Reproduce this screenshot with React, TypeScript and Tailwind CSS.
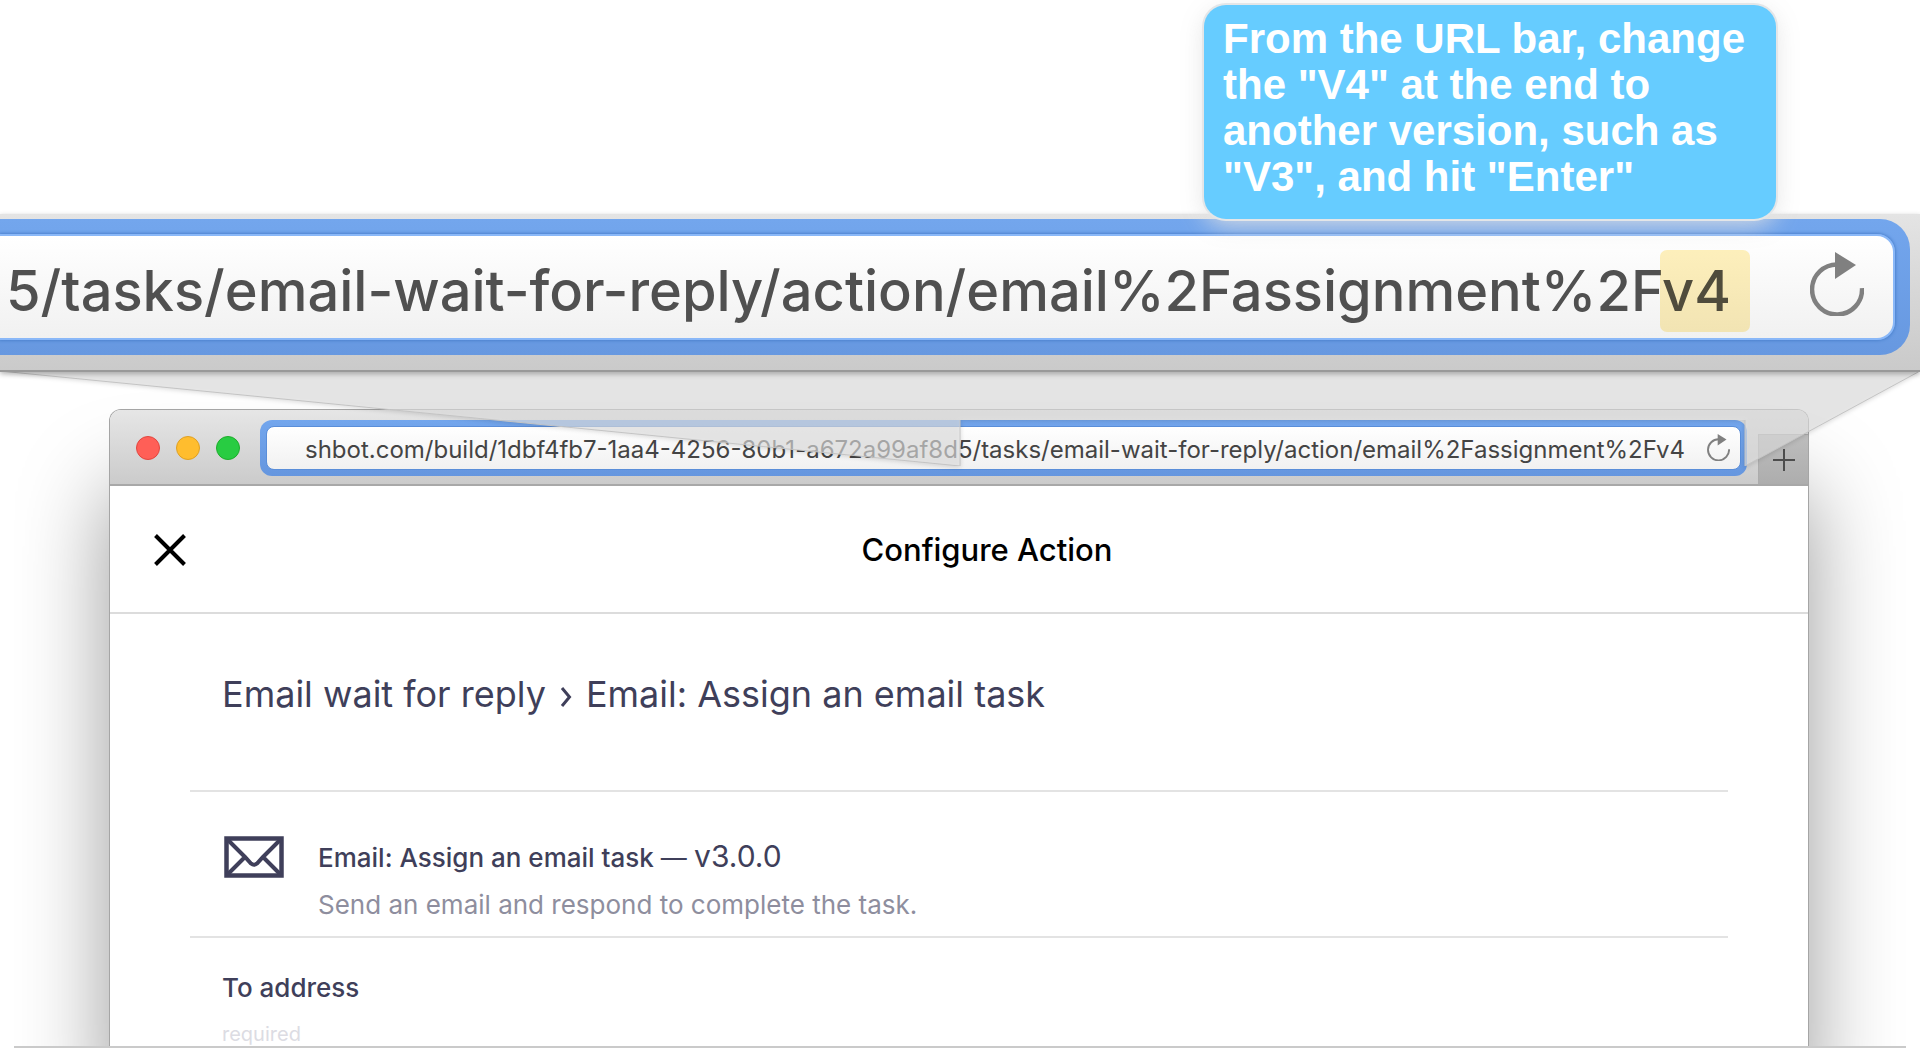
import React from "react";

const URL_TAIL = "5/tasks/email-wait-for-reply/action/email%2Fassignment%2Fv4";
const URL_HEAD = "shbot.com/build/1dbf4fb7-1aa4-4256-80b1-a672a99af8d";

function ReloadIcon({ className }: { className: string }) {
  return (
    <svg viewBox="0 0 54 64" className={className} fill="none" aria-hidden="true">
      <path d="M28 12.5A25 25 0 1 0 52 36" stroke="#808080" strokeWidth="4.5" />
      <path d="M25 0L46 13L25 27Z" fill="#808080" />
    </svg>
  );
}

function Callout() {
  return (
    <aside className="absolute top-[5px] right-[144px] z-30 h-[214px] w-[572px] rounded-[22px] bg-[#66ccff] px-[19px] pt-[11px] font-['Liberation_Sans',Arial,sans-serif] text-[42px] leading-[46px] font-bold text-white shadow-[0_0_0_2px_#e4e6e8,0_6px_24px_rgba(225,225,225,0.9)]">
      From the URL bar, change
      <br />
      the "V4" at the end to
      <br />
      another version, such as
      <br />
      "V3", and hit "Enter"
    </aside>
  );
}

function MagnifiedBar() {
  return (
    <section className="relative z-20 mt-[214px] border-b-2 border-[#999] bg-linear-to-b from-[#e4e4e4] to-[#cacaca] pt-[5px] pr-[10px] pb-[15px] shadow-[0_2px_5px_rgba(0,0,0,0.3)]">
      <div className="rounded-r-[30px] bg-linear-to-b from-[#73a6ed] to-[#6798e0] py-[15px] pr-[15px]">
        <div className="relative flex h-[106px] items-center rounded-r-[18px] border-y-2 border-r-2 border-[#8ab8f8] bg-linear-to-b from-white to-[#f1f1f1] shadow-[0_0_3px_1px_#4c83cf]">
          <input
            aria-label="Magnified address"
            defaultValue={URL_TAIL}
            className="h-20 w-full min-w-0 flex-1 bg-transparent pt-2 pl-[6px] text-[56px] font-medium text-[#505050] outline-none"
          />
          <span className="absolute top-[14px] right-[143px] h-[82px] w-[90px] rounded-[7px] bg-[#ffdc5a]/40 mix-blend-multiply" />
          <button aria-label="Reload magnified page" className="absolute top-4 right-[29px]">
            <ReloadIcon className="h-[64px] w-[54px]" />
          </button>
        </div>
      </div>
    </section>
  );
}

function Wedge() {
  return (
    <svg
      className="absolute top-[372px] left-0 z-10 h-[94px] w-full drop-shadow-[0_1px_2px_rgba(0,0,0,0.2)]"
      viewBox="0 0 1920 94"
      preserveAspectRatio="none"
      aria-hidden="true"
    >
      <path d="M0 -1H1920L1745 94V48H960V94Z" fill="#e6e6e6" fillOpacity="0.62" />
      <path d="M0 -1L960 94V48M1745 48V94L1920 -1" fill="none" stroke="#c4c4c4" strokeWidth="1" />
    </svg>
  );
}

function Toolbar() {
  return (
    <div className="flex h-[76px] items-center rounded-t-[11px] border-b-2 border-[#a8a8a8] bg-linear-to-b from-[#e6e6e6] to-[#cbcbcb] pt-[2px] pl-[26px]">
      <div className="flex gap-4">
        <button aria-label="Close window" className="size-6 rounded-full border border-[#e2463f] bg-[#ff5f57]" />
        <button aria-label="Minimize window" className="size-6 rounded-full border border-[#dfa023] bg-[#ffbd2e]" />
        <button aria-label="Zoom window" className="size-6 rounded-full border border-[#1dad2b] bg-[#28cc42]" />
      </div>
      <div className="ml-5 flex-1 rounded-[12px] bg-linear-to-b from-[#73a6ed] to-[#6596df] p-[6px]">
        <div className="flex h-[44px] items-center rounded-[8px] border border-[#5a8ed9] bg-linear-to-b from-white to-[#f1f1f1] pr-[10px] pl-[38px]">
          <input
            aria-label="Address"
            defaultValue={URL_HEAD + URL_TAIL}
            className="h-9 min-w-0 flex-1 bg-transparent pt-1 text-[24px] text-[#444] outline-none"
          />
          <button aria-label="Reload">
            <ReloadIcon className="mb-[2px] h-[27px] w-[23px]" />
          </button>
        </div>
      </div>
      <button
        aria-label="New tab"
        className="ml-[11px] flex h-[50px] w-[50px] items-center justify-center self-end border-t border-l border-[#acacac] bg-linear-to-b from-[#bdbdbd] to-[#adadad]"
      >
        <svg viewBox="0 0 22 22" className="size-[22px]" stroke="#4d4d4d" strokeWidth="2" aria-hidden="true">
          <path d="M11 0V22M0 11H22" />
        </svg>
      </button>
    </div>
  );
}

function EnvelopeIcon() {
  return (
    <svg viewBox="0 0 60 42" className="h-[42px] w-[60px]" fill="none" stroke="#3f3f5a" strokeWidth="4.5" aria-hidden="true">
      <rect x="2.500" y="2.500" width="55" height="37" />
      <path d="M3 3L21 21L27 27.500Q30 30 33 27.500L39 21L57 3M3 39L21 21M57 39L39 21" strokeWidth="4" />
    </svg>
  );
}

function BrowserWindow() {
  return (
    <div className="mr-[97px] ml-[95px] rounded-t-[12px] border border-b-0 border-[#a5a5a5] bg-white shadow-[0_80px_90px_rgba(0,0,0,0.4)]">
      <Toolbar />
      <header className="relative flex h-[128px] items-center justify-center border-b-2 border-[#dcdcdc] pt-[2px]">
        <button aria-label="Close" className="absolute left-[44px]">
          <svg viewBox="0 0 32 32" className="size-8" stroke="#000" strokeWidth="4" aria-hidden="true">
            <path d="M1.500 1.500L30.500 30.500M30.500 1.500L1.500 30.500" />
          </svg>
        </button>
        <h1 className="pl-[56px] text-[31px] leading-10 font-medium text-black">Configure Action</h1>
      </header>
      <main className="px-[80px]">
        <h2 className="flex h-[178px] items-center border-b-2 border-[#e3e3e3] pb-4 pl-8 text-[36px] text-[#3f3f5a]">
          Email wait for reply
          <svg viewBox="0 0 12 20" className="mx-[14px] mt-[6px] h-5 w-3" fill="none" stroke="#3f3f5a" strokeWidth="3" aria-hidden="true">
            <path d="M2 1L9.500 10L2 19" />
          </svg>
          Email: Assign an email task
        </h2>
        <section className="flex h-[146px] gap-[34px] border-b-2 border-[#e3e3e3] pt-[44px] pl-[34px]">
          <EnvelopeIcon />
          <div>
            <h3 className="text-[26px] leading-10 font-medium text-[#3f3f5a]">
              Email: Assign an email task <span className="font-normal">— </span>
              <span className="text-[30px] font-normal">v3.0.0</span>
            </h3>
            <p className="mt-[7px] text-[26px] leading-10 text-[#8e8e9e]">Send an email and respond to complete the task.</p>
          </div>
        </section>
        <section className="pt-[30px] pl-8">
          <h4 className="text-[26px] leading-10 font-medium text-[#3f3f5a]">To address</h4>
          <p className="mt-[14px] text-[20px] leading-6 text-[#dcdce3]">required</p>
        </section>
      </main>
    </div>
  );
}

export default function App() {
  return (
    <div className="relative overflow-hidden bg-white font-[Inter,sans-serif]">
      <Callout />
      <MagnifiedBar />
      <Wedge />
      <div className="mx-[14px] overflow-hidden border-b-2 border-[#cacaca] pt-[37px]">
        <BrowserWindow />
      </div>
    </div>
  );
}
